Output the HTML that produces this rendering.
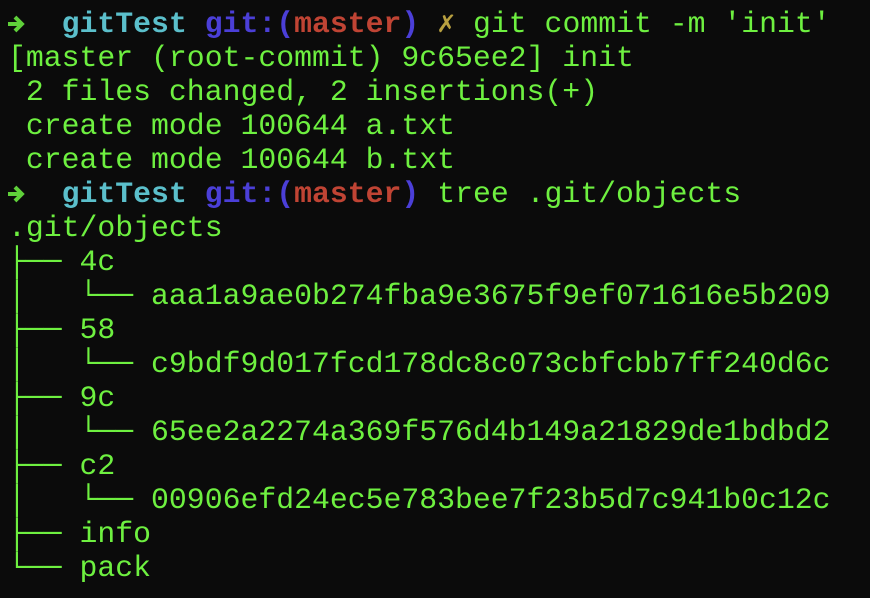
<!DOCTYPE html>
<html><head><meta charset="utf-8"><style>
html,body{margin:0;padding:0;background:#0b0b0b;width:870px;height:598px;overflow:hidden}
pre{margin:0;padding:7px 0 0 8px;font-family:"Liberation Mono","DejaVu Sans Mono",monospace;font-size:29.8px;line-height:34px;color:#6ef040;white-space:pre}
.c{color:#5bbfcb;font-weight:bold}.b{color:#4b3fd8;font-weight:bold}.r{color:#c04434;font-weight:bold}.y{color:#b8a040;font-weight:bold}
.ar{display:inline-block;width:17.9px;height:20px;vertical-align:-2px;overflow:visible}
</style></head><body><pre><svg class="ar" viewBox="0 0 18 20"><path d="M0 10H13M7 3L14 10L7 17" stroke="#5fd03a" stroke-width="4" fill="none" stroke-linejoin="miter"/></svg>  <span class="c">gitTest</span> <span class="b">git:(</span><span class="r">master</span><span class="b">)</span> <span class="y">✗</span> git commit -m 'init'
[master (root-commit) 9c65ee2] init
 2 files changed, 2 insertions(+)
 create mode 100644 a.txt
 create mode 100644 b.txt
<svg class="ar" viewBox="0 0 18 20"><path d="M0 10H13M7 3L14 10L7 17" stroke="#5fd03a" stroke-width="4" fill="none" stroke-linejoin="miter"/></svg>  <span class="c">gitTest</span> <span class="b">git:(</span><span class="r">master</span><span class="b">)</span> tree .git/objects
.git/objects
├── 4c
│   └── aaa1a9ae0b274fba9e3675f9ef071616e5b209
├── 58
│   └── c9bdf9d017fcd178dc8c073cbfcbb7ff240d6c
├── 9c
│   └── 65ee2a2274a369f576d4b149a21829de1bdbd2
├── c2
│   └── 00906efd24ec5e783bee7f23b5d7c941b0c12c
├── info
└── pack
</pre></body></html>
